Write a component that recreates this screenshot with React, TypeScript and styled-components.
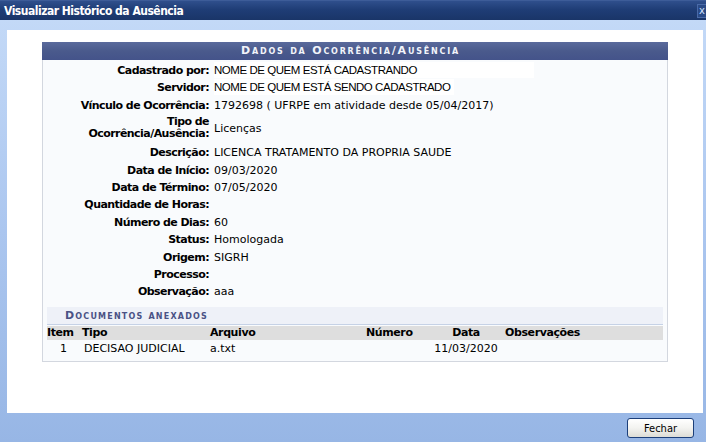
import React from 'react';
import styled, { createGlobalStyle } from 'styled-components';

const GlobalStyle = createGlobalStyle`
	html, body {
		margin: 0;
		padding: 0;
		background: #ffffff;
	}
	body {
		font-family: 'DejaVu Sans', Verdana, sans-serif;
		font-size: 11px;
		color: #000;
	}
`;

const detalhes: { label: React.ReactNode; value: string; tall?: boolean; fill?: number }[] = [
	{ label: 'Cadastrado por:', value: 'NOME DE QUEM ESTÁ CADASTRANDO', fill: 117 },
	{ label: 'Servidor:', value: 'NOME DE QUEM ESTÁ SENDO CADASTRADO', fill: 4 },
	{ label: 'Vínculo de Ocorrência:', value: '1792698 ( UFRPE em atividade desde 05/04/2017)' },
	{
		label: (
			<>
				Tipo de
				<br />
				Ocorrência/Ausência:
			</>
		),
		value: 'Licenças',
		tall: true,
	},
	{ label: 'Descrição:', value: 'LICENCA TRATAMENTO DA PROPRIA SAUDE' },
	{ label: 'Data de Início:', value: '09/03/2020' },
	{ label: 'Data de Término:', value: '07/05/2020' },
	{ label: 'Quantidade de Horas:', value: '' },
	{ label: 'Número de Dias:', value: '60' },
	{ label: 'Status:', value: 'Homologada' },
	{ label: 'Origem:', value: 'SIGRH' },
	{ label: 'Processo:', value: '' },
	{ label: 'Observação:', value: 'aaa' },
];

const documentos = [{ item: '1', tipo: 'DECISAO JUDICIAL', arquivo: 'a.txt', numero: '', data: '11/03/2020', obs: '' }];

function App() {
	return (
		<Window>
			<GlobalStyle />
			<TitleBar>
				<Title>Visualizar Histórico da Ausência</Title>
				<CloseButton>x</CloseButton>
			</TitleBar>
			<Frame>
				<Content>
					<Panel>
						<PanelHeader>Dados da Ocorrência/Ausência</PanelHeader>
						<Details>
							{detalhes.map((d, i) => (
								<React.Fragment key={i}>
									<Label $tall={d.tall}>{d.label}</Label>
									<Value $tall={d.tall}>
										{d.fill !== undefined ? <Highlight $fill={d.fill}>{d.value}</Highlight> : d.value}
									</Value>
								</React.Fragment>
							))}
						</Details>
						<SubHeader>Documentos anexados</SubHeader>
						<DocTable>
							<colgroup>
								<col style={{ width: 33 }} />
								<col style={{ width: 128 }} />
								<col style={{ width: 156 }} />
								<col style={{ width: 65 }} />
								<col style={{ width: 74 }} />
								<col />
							</colgroup>
							<thead>
								<tr>
									<Th>Item</Th>
									<Th>Tipo</Th>
									<Th>Arquivo</Th>
									<Th>Número</Th>
									<Th $center>Data</Th>
									<Th>Observações</Th>
								</tr>
							</thead>
							<tbody>
								{documentos.map((doc) => (
									<tr key={doc.item}>
										<Td $center>{doc.item}</Td>
										<Td $indent>{doc.tipo}</Td>
										<Td>{doc.arquivo}</Td>
										<Td>{doc.numero}</Td>
										<Td $center>{doc.data}</Td>
										<Td>{doc.obs}</Td>
									</tr>
								))}
							</tbody>
						</DocTable>
					</Panel>
				</Content>
				<Footer>
					<Button>Fechar</Button>
				</Footer>
			</Frame>
		</Window>
	);
}

export default App;

const Window = styled.div`
	width: 706px;
	height: 442px;
	display: flex;
	flex-direction: column;
	overflow: hidden;
`;

const TitleBar = styled.div`
	height: 20px;
	flex: 0 0 auto;
	display: flex;
	align-items: center;
	justify-content: space-between;
	background: linear-gradient(#2f4f8c 0%, #1f3d76 45%, #1a3568 100%);
	border-top: 1px solid #3d5c98;
	box-sizing: border-box;
`;

const Title = styled.span`
	font-family: 'DejaVu Sans Condensed', 'DejaVu Sans', sans-serif;
	font-weight: bold;
	font-size: 12px;
	color: #ffffff;
	padding-left: 4px;
	letter-spacing: -0.5px;
`;

const CloseButton = styled.span`
	width: 8px;
	height: 12px;
	font-family: 'DejaVu Sans', sans-serif;
	font-size: 10px;
	line-height: 11px;
	color: #cfe0ff;
	background: #2a4a86;
	border: 1px solid #4a6aa8;
	border-right: none;
	text-align: center;
	overflow: hidden;
`;

const Frame = styled.div`
	flex: 1;
	display: flex;
	flex-direction: column;
	background: linear-gradient(#c3d9f7 0%, #abc6ef 50%, #97b6e5 100%);
	padding: 10px 3px 0 7px;
`;

const Content = styled.div`
	height: 383px;
	background: #ffffff;
	padding: 12px 35px 0;
	box-sizing: border-box;
`;

const Panel = styled.div`
	background: #f9fbfd;
	border: 1px solid #d3d7df;
	border-top: none;
	padding-bottom: 3px;
`;

const PanelHeader = styled.div`
	height: 18px;
	line-height: 18px;
	margin: 0 -1px;
	padding-right: 9px;
	text-align: center;
	background: linear-gradient(#5a6a9c 0%, #4a5a8c 50%, #44538a 100%);
	color: #f2f4fa;
	font-weight: bold;
	font-variant: small-caps;
	font-size: 11px;
	letter-spacing: 1.8px;
`;

const Details = styled.div`
	display: grid;
	grid-template-columns: 166px 1fr;
	column-gap: 5px;
	padding-top: 2px;
`;

const Label = styled.div<{ $tall?: boolean }>`
	text-align: right;
	font-weight: bold;
	letter-spacing: -0.55px;
	height: ${(p) => (p.$tall ? 30 : 17.4)}px;
	line-height: ${(p) => (p.$tall ? '12px' : '17.4px')};
	padding-top: ${(p) => (p.$tall ? 2 : 0)}px;
	box-sizing: border-box;
	white-space: nowrap;
`;

const Value = styled.div<{ $tall?: boolean }>`
	height: ${(p) => (p.$tall ? 30 : 17.4)}px;
	line-height: ${(p) => (p.$tall ? '29px' : '17.4px')};
	white-space: nowrap;
`;

const Highlight = styled.span<{ $fill: number }>`
	font-family: 'Liberation Sans', Arial, sans-serif;
	font-size: 11.5px;
	letter-spacing: -0.45px;
	background: #ffffff;
	padding: 2px ${(p) => p.$fill}px 2px 0;
`;

const SubHeader = styled.div`
	margin: 6px 4px 0;
	height: 17px;
	line-height: 17px;
	padding-left: 18px;
	background: #eef1f8;
	border-bottom: 1px solid #c6d2e6;
	color: #4a5285;
	font-weight: bold;
	font-variant: small-caps;
	font-size: 11px;
	letter-spacing: 1.2px;
`;

const DocTable = styled.table`
	width: calc(100% - 8px);
	margin: 1px 4px 0;
	border-collapse: collapse;
	table-layout: fixed;
`;

const Th = styled.th<{ $center?: boolean }>`
	background: #dedede;
	font-weight: bold;
	letter-spacing: -0.4px;
	height: 14px;
	line-height: 14px;
	padding: 0 2px;
	text-align: ${(p) => (p.$center ? 'center' : 'left')};
	white-space: nowrap;
	&:first-child {
		padding-left: 0;
	}
`;

const Td = styled.td<{ $center?: boolean; $indent?: boolean }>`
	height: 18px;
	line-height: 18px;
	padding: 0 ${(p) => (p.$indent ? '4px' : '2px')};
	text-align: ${(p) => (p.$center ? 'center' : 'left')};
	white-space: nowrap;
`;

const Footer = styled.div`
	flex: 1;
	display: flex;
	align-items: center;
	justify-content: flex-end;
	padding-right: 9px;
`;

const Button = styled.button`
	width: 67px;
	height: 20px;
	margin-top: 1px;
	padding: 0;
	font-family: 'DejaVu Sans Condensed', 'DejaVu Sans', sans-serif;
	font-size: 11px;
	color: #000;
	background: linear-gradient(#ffffff 0%, #f3f3f0 50%, #dcdcd6 100%);
	border: 1px solid #1c3f7a;
	border-radius: 3px;
`;
